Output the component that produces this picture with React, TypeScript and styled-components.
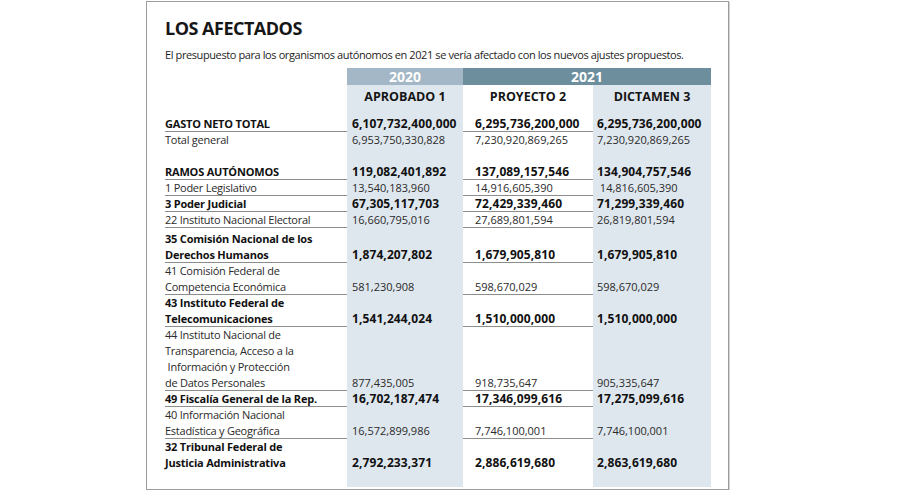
import React from "react";
import styled, { createGlobalStyle } from "styled-components";

const GlobalStyle = createGlobalStyle`
  html, body { margin: 0; padding: 0; background: #ffffff; }
  body { font-family: "Open Sans", "Noto Sans", sans-serif; color: #1b1b1b; }
`;

const COLS = "182px 116px 130px 118px";
const SHADE = "#dfe7ee";

const Page = styled.div`
  padding: 1px 0 0 146px;
`;

const Frame = styled.div`
  box-sizing: border-box;
  width: 583px;
  height: 489px;
  border: 1px solid #9c9c9c;
  box-shadow: 1px 1px 0 #d4d4d4;
  padding: 14px 17px 0 18px;
  display: flex;
  flex-direction: column;
  background: #fff;
`;

const Title = styled.h1`
  margin: 0;
  font-size: 18px;
  line-height: 24px;
  font-weight: 700;
  letter-spacing: -0.5px;
  color: #161616;
`;

const Subtitle = styled.p`
  margin: 7px 0 5px;
  font-size: 11px;
  line-height: 16px;
  letter-spacing: -0.4px;
  color: #1e1e1e;
`;

const Table = styled.div`
  flex: 1;
  display: flex;
  flex-direction: column;
`;

const Row = styled.div<{ $line?: boolean; $grow?: boolean }>`
  display: grid;
  grid-template-columns: ${COLS};
  box-shadow: ${(p) => (p.$line ? "inset 0 -1px 0 #8d8d8d" : "none")};
  flex: ${(p) => (p.$grow ? 1 : "none")};
`;

const Cell = styled.div<{ $shade?: boolean; $padTop?: number }>`
  background: ${(p) => (p.$shade ? SHADE : "transparent")};
  display: flex;
  align-items: flex-end;
  padding-top: ${(p) => p.$padTop ?? 0}px;
  min-height: 16px;
`;

const YearCell = styled.div<{ $dark?: boolean; $span?: number }>`
  grid-column: span ${(p) => p.$span ?? 1};
  height: 17px;
  background: ${(p) => (p.$dark ? "#6c8e9d" : "#a3b7c6")};
  color: #fff;
  font-weight: 700;
  font-size: 14px;
  line-height: 17px;
  text-align: center;
`;

const HeadCell = styled.div<{ $shade?: boolean }>`
  background: ${(p) => (p.$shade ? SHADE : "transparent")};
  height: 31px;
  box-sizing: border-box;
  padding-top: 4px;
  font-weight: 700;
  font-size: 12.5px;
  line-height: 16px;
  text-align: center;
  color: #151515;
`;

const Label = styled.span<{ $bold?: boolean }>`
  font-size: 11px;
  line-height: 16px;
  font-weight: ${(p) => (p.$bold ? 700 : 400)};
  letter-spacing: ${(p) => (p.$bold ? "-0.2px" : "-0.25px")};
  color: ${(p) => (p.$bold ? "#111" : "#2a2a2a")};
  white-space: pre-line;
`;

const Num = styled.span<{ $bold?: boolean; $indent?: number }>`
  font-size: ${(p) => (p.$bold ? "12px" : "11px")};
  line-height: 16px;
  font-weight: ${(p) => (p.$bold ? 700 : 400)};
  letter-spacing: ${(p) => (p.$bold ? "0.1px" : "0px")};
  color: ${(p) => (p.$bold ? "#111" : "#2a2a2a")};
  padding-left: ${(p) => p.$indent ?? 4}px;
`;

type R = {
  label: string;
  vals: [string, string, string];
  bold?: boolean;
  line?: boolean;
  padTop?: number;
};

const rows: (R | null)[] = [
  { label: "GASTO NETO TOTAL", vals: ["6,107,732,400,000", "6,295,736,200,000", "6,295,736,200,000"], bold: true, line: true },
  { label: "Total general", vals: ["6,953,750,330,828", "7,230,920,869,265", "7,230,920,869,265"] },
  null,
  { label: "RAMOS AUTÓNOMOS", vals: ["119,082,401,892", "137,089,157,546", "134,904,757,546"], bold: true, line: true },
  { label: "1 Poder Legislativo", vals: ["13,540,183,960", "14,916,605,390", "\u00a014,816,605,390"], line: true },
  { label: "3 Poder Judicial", vals: ["67,305,117,703", "72,429,339,460", "71,299,339,460"], bold: true, line: true },
  { label: "22 Instituto Nacional Electoral", vals: ["16,660,795,016", "27,689,801,594", "26,819,801,594"], line: true },
  { label: "35 Comisión Nacional de los\nDerechos Humanos", vals: ["1,874,207,802", "1,679,905,810", "1,679,905,810"], bold: true, line: true, padTop: 3 },
  { label: "41 Comisión Federal de\nCompetencia Económica", vals: ["581,230,908", "598,670,029", "598,670,029"], line: true },
  { label: "43 Instituto Federal de\nTelecomunicaciones", vals: ["1,541,244,024", "1,510,000,000", "1,510,000,000"], bold: true, line: true },
  { label: "44 Instituto Nacional de\nTransparencia, Acceso a la\n\u00a0Información y Protección\nde Datos Personales", vals: ["877,435,005", "918,735,647", "905,335,647"], line: true },
  { label: "49 Fiscalía General de la Rep.", vals: ["16,702,187,474", "17,346,099,616", "17,275,099,616"], bold: true, line: true },
  { label: "40 Información Nacional\nEstadística y Geográfica", vals: ["16,572,899,986", "7,746,100,001", "7,746,100,001"], line: true },
  { label: "32 Tribunal Federal de\nJusticia Administrativa", vals: ["2,792,233,371", "2,886,619,680", "2,863,619,680"], bold: true },
];

const indents = [5, 12, 4];

function Filler() {
  return (
    <>
      <Cell />
      <Cell $shade />
      <Cell />
      <Cell $shade />
    </>
  );
}

export default function App() {
  return (
    <>
      <GlobalStyle />
      <Page>
        <Frame>
          <Title>LOS AFECTADOS</Title>
          <Subtitle>
            El presupuesto para los organismos autónomos en 2021 se vería afectado con los nuevos ajustes propuestos.
          </Subtitle>
          <Table>
            <Row>
              <div />
              <YearCell>2020</YearCell>
              <YearCell $dark $span={2}>2021</YearCell>
            </Row>
            <Row>
              <HeadCell />
              <HeadCell $shade>APROBADO 1</HeadCell>
              <HeadCell>PROYECTO 2</HeadCell>
              <HeadCell $shade>DICTAMEN 3</HeadCell>
            </Row>
            {rows.map((r, i) =>
              r === null ? (
                <Row key={i}>
                  <Filler />
                </Row>
              ) : (
                <Row key={i} $line={r.line}>
                  <Cell $padTop={r.padTop}>
                    <Label $bold={r.bold}>{r.label}</Label>
                  </Cell>
                  {r.vals.map((v, j) => (
                    <Cell key={j} $shade={j !== 1}>
                      <Num $bold={r.bold} $indent={indents[j]}>{v}</Num>
                    </Cell>
                  ))}
                </Row>
              )
            )}
            <Row $grow>
              <Filler />
            </Row>
            <Row>
              <Cell />
            </Row>
          </Table>
        </Frame>
      </Page>
    </>
  );
}
